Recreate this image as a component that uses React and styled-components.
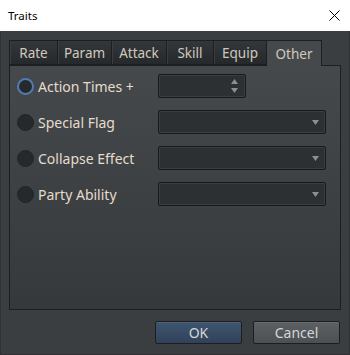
import React from "react";
import styled, { createGlobalStyle } from "styled-components";

const Global = createGlobalStyle`
  html, body { margin: 0; padding: 0; background: #3a3d40; }
  body { font-family: "Noto Sans", "DejaVu Sans", sans-serif; }
`;

const Window = styled.div`
  width: 350px;
  height: 355px;
  box-sizing: border-box;
  display: flex;
  flex-direction: column;
  background: #3b3e41;
  border-left: 1px solid #2f3134;
  border-right: 1px solid #2f3134;
  border-bottom: 1px solid #2f3134;
`;

const TitleBar = styled.div`
  height: 31px;
  flex: none;
  background: #ffffff;
  display: flex;
  align-items: center;
  justify-content: space-between;
  padding: 0 10px 0 8px;
  margin: 0 -1px;
  font-size: 11.5px;
  color: #000;
`;

const Body = styled.div`
  flex: 1;
  display: flex;
  flex-direction: column;
  padding: 9px 8px 10px 8px;
`;

const TabBar = styled.div`
  display: flex;
  height: 25px;
  position: relative;
  z-index: 1;
`;

const Tab = styled.div`
  box-sizing: border-box;
  width: ${(p) => p.$w}px;
  height: ${(p) => (p.$active ? 26 : 25)}px;
  border: 1px solid #1c1e20;
  border-bottom: ${(p) => (p.$active ? "none" : "1px solid #1c1e20")};
  border-left-width: ${(p) => (p.$first ? 1 : 0)}px;
  background: ${(p) =>
    p.$active
      ? "#46494c"
      : "linear-gradient(#33363a, #26292c)"};
  box-shadow: ${(p) => (p.$active ? "none" : "inset 1px 0 0 #3a3d40")};
  color: #cfc9bd;
  font-size: 13.5px;
  display: flex;
  align-items: center;
  justify-content: center;
`;

const Pane = styled.div`
  box-sizing: border-box;
  height: 245px;
  border: 1px solid #1c1e20;
  background: linear-gradient(#46494c, #36393c);
  padding: 8px 14px 0 7px;
  display: flex;
  flex-direction: column;
  gap: 12px;
`;

const Row = styled.div`
  display: grid;
  grid-template-columns: 141px 1fr;
  align-items: center;
  height: 24px;
`;

const LabelWrap = styled.label`
  display: flex;
  align-items: center;
  gap: 4px;
  color: #e4dccc;
  font-size: 14px;
`;

const Radio = styled.span`
  box-sizing: border-box;
  width: 17px;
  height: 17px;
  border-radius: 50%;
  background: #26292c;
  border: ${(p) => (p.$focus ? "2px solid #4f7db2" : "1px solid #222427")};
  flex: none;
`;

const Field = styled.div`
  box-sizing: border-box;
  width: ${(p) => p.$w}px;
  height: 24px;
  border: 1px solid #17191b;
  border-radius: 2px;
  background: #2d3033;
  box-shadow: inset 0 0 0 1px #3b3e41;
  display: flex;
  align-items: center;
  justify-content: flex-end;
  padding-right: 6px;
`;

const Spin = styled.div`
  display: flex;
  flex-direction: column;
  gap: 4px;
  margin-right: 1px;
`;

const Footer = styled.div`
  display: flex;
  justify-content: flex-end;
  gap: 11px;
  margin-top: 11px;
  padding-right: 1px;
`;

const Button = styled.button`
  box-sizing: border-box;
  width: 87px;
  height: 23px;
  border: 1px solid #1c1e20;
  border-radius: 2px;
  font-family: "Noto Sans", "DejaVu Sans", sans-serif;
  font-size: 14px;
  line-height: 1;
  color: #d3d6d9;
  padding: 0;
  background: ${(p) =>
    p.$primary
      ? "linear-gradient(#3f5670, #2f4259)"
      : "linear-gradient(#5d6063, #4d5053)"};
  box-shadow: inset 0 1px 0 rgba(255,255,255,0.08);
`;

const Arrow = ({ up }) => (
  <svg width="7" height="5" viewBox="0 0 7 5">
    <path d={up ? "M0 5 L3.5 0 L7 5 Z" : "M0 0 L7 0 L3.5 5 Z"} fill="#8c8f92" />
  </svg>
);

const Close = () => (
  <svg width="11" height="11" viewBox="0 0 11 11">
    <path d="M0.5 0.5 L10.5 10.5 M10.5 0.5 L0.5 10.5" stroke="#000" strokeWidth="1" />
  </svg>
);

const tabs = [
  ["Rate", 49],
  ["Param", 54],
  ["Attack", 55],
  ["Skill", 47],
  ["Equip", 53],
  ["Other", 55],
];

const rows = [
  { label: "Action Times +", spin: true, focus: true },
  { label: "Special Flag" },
  { label: "Collapse Effect" },
  { label: "Party Ability" },
];

export default function App() {
  return (
    <>
      <Global />
      <Window>
        <TitleBar>
          <span>Traits</span>
          <Close />
        </TitleBar>
        <Body>
          <TabBar>
            {tabs.map(([t, w], i) => (
              <Tab key={t} $w={w} $first={i === 0} $active={t === "Other"}>
                {t}
              </Tab>
            ))}
          </TabBar>
          <Pane>
            {rows.map((r) => (
              <Row key={r.label}>
                <LabelWrap>
                  <Radio $focus={r.focus} />
                  {r.label}
                </LabelWrap>
                {r.spin ? (
                  <Field $w={88}>
                    <Spin>
                      <Arrow up />
                      <Arrow />
                    </Spin>
                  </Field>
                ) : (
                  <Field $w={168}>
                    <Arrow />
                  </Field>
                )}
              </Row>
            ))}
          </Pane>
          <Footer>
            <Button $primary>OK</Button>
            <Button>Cancel</Button>
          </Footer>
        </Body>
      </Window>
    </>
  );
}
